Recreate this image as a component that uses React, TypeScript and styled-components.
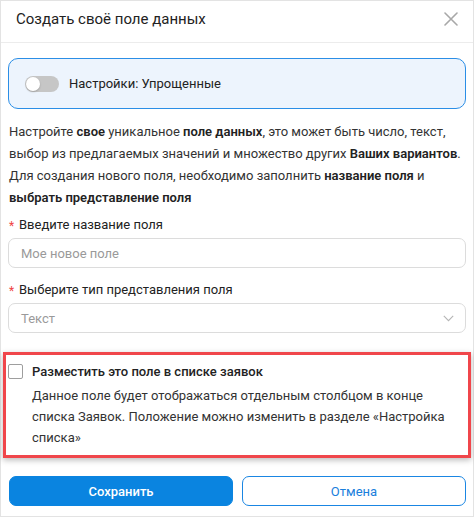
import React, { useState } from 'react';
import styled, { createGlobalStyle } from 'styled-components';

const GlobalStyle = createGlobalStyle`
  html, body {
    margin: 0;
    padding: 0;
    background: #ffffff;
  }
  * {
    box-sizing: border-box;
  }
`;

const Modal = styled.div`
  width: 474px;
  height: 517px;
  border: 1px solid #e3e3e3;
  background: #fff;
  font-family: Roboto, 'Liberation Sans', sans-serif;
  color: #2b2b2b;
  display: flex;
  flex-direction: column;
`;

const Header = styled.div`
  height: 42px;
  flex-shrink: 0;
  display: flex;
  align-items: center;
  justify-content: space-between;
  padding: 0 14px 5px 15px;
  border-bottom: 1px solid #ececec;
`;

const Title = styled.div`
  font-size: 15px;
  color: #222;
`;

const CloseButton = styled.button`
  border: none;
  background: none;
  padding: 0;
  width: 16px;
  height: 16px;
  display: flex;
  align-items: center;
  justify-content: center;
  cursor: pointer;
`;

const Body = styled.div`
  padding: 15px 7px 0 7px;
  display: flex;
  flex-direction: column;
`;

const SettingsBox = styled.div`
  height: 51px;
  border: 1px solid #2b8ee6;
  border-radius: 10px;
  background: #edf4fd;
  display: flex;
  align-items: center;
  gap: 10px;
  padding-left: 16px;
  font-size: 13px;
  color: #222;
`;

const Toggle = styled.button<{ $on: boolean }>`
  position: relative;
  width: 34px;
  height: 16px;
  border-radius: 8px;
  border: none;
  padding: 0;
  background: ${({ $on }) => ($on ? '#1e88e5' : '#c6c6c6')};
  cursor: pointer;

  &::after {
    content: '';
    position: absolute;
    top: 1px;
    left: ${({ $on }) => ($on ? '19px' : '1px')};
    width: 14px;
    height: 14px;
    border-radius: 50%;
    background: #fff;
    box-shadow: 0 1px 2px rgba(0, 0, 0, 0.2);
  }
`;

const Description = styled.p`
  margin: 12px 0 0 1px;
  font-size: 13px;
  line-height: 22px;
  color: #333;

  b {
    font-weight: 600;
    color: #222;
  }
`;

const Label = styled.div`
  margin-top: 3px;
  font-size: 13px;
  line-height: 22px;
  color: #222;
  display: flex;
  align-items: center;
  gap: 4px;
`;

const Asterisk = styled.span`
  color: #ef4444;
  font-size: 12px;
  width: 7px;
  padding-top: 3px;
  text-align: center;
`;

const Input = styled.input`
  margin-top: 1px;
  width: 100%;
  height: 30px;
  border: 1px solid #dcdcdc;
  border-radius: 7px;
  padding: 0 12px;
  font-family: inherit;
  font-size: 13px;
  color: #222;
  outline: none;

  &::placeholder {
    color: #9a9a9a;
  }
`;

const Select = styled.div`
  margin-top: 1px;
  height: 30px;
  border: 1px solid #dcdcdc;
  border-radius: 7px;
  padding: 0 11px 0 12px;
  display: flex;
  align-items: center;
  justify-content: space-between;
  font-size: 13px;
  color: #9a9a9a;
`;

const FieldGroup = styled.div<{ $gap?: number }>`
  margin-top: ${({ $gap }) => $gap ?? 0}px;
`;

const Highlight = styled.section`
  margin: 19px -5px 0 -5px;
  border: 3px solid #f0464b;
  box-shadow: 0 2px 6px rgba(0, 0, 0, 0.28);
  padding: 9px 10px 7px 2px;
`;

const CheckRow = styled.label`
  display: flex;
  align-items: center;
  gap: 9px;
  font-size: 13px;
  font-weight: 500;
  color: #222;
  cursor: pointer;
`;

const Checkbox = styled.span`
  width: 15px;
  height: 15px;
  border: 1px solid #9e9e9e;
  border-radius: 2px;
  background: #fff;
`;

const CheckText = styled.p`
  margin: 6px 0 0 24px;
  font-size: 13px;
  line-height: 21px;
  color: #333;
`;

const Actions = styled.div`
  margin-top: 18px;
  display: grid;
  grid-template-columns: 1fr 1fr;
  gap: 9px;
  padding: 0 0 0 1px;
`;

const Button = styled.button<{ $primary?: boolean }>`
  height: 30px;
  border-radius: 7px;
  font-family: inherit;
  font-size: 13px;
  cursor: pointer;
  border: 1px solid ${({ $primary }) => ($primary ? '#0a84e0' : '#1a86e3')};
  background: ${({ $primary }) => ($primary ? '#0a84e0' : '#fff')};
  color: ${({ $primary }) => ($primary ? '#fff' : '#1a80dc')};
  font-weight: ${({ $primary }) => ($primary ? 500 : 400)};
`;

const App: React.FC = () => {
  const [advanced, setAdvanced] = useState(false);

  return (
    <>
      <GlobalStyle />
      <Modal>
        <Header>
          <Title>Создать своё поле данных</Title>
          <CloseButton aria-label="close">
            <svg width="14" height="14" viewBox="0 0 14 14">
              <path d="M1 1 L13 13 M13 1 L1 13" stroke="#a8a8a8" strokeWidth="1.6" strokeLinecap="round" />
            </svg>
          </CloseButton>
        </Header>
        <Body>
          <SettingsBox>
            <Toggle $on={advanced} onClick={() => setAdvanced(!advanced)} />
            <span>Настройки: Упрощенные</span>
          </SettingsBox>

          <Description>
            Настройте <b>свое</b> уникальное <b>поле данных</b>, это может быть число, текст,
            выбор из предлагаемых значений и множество других <b>Ваших вариантов</b>.
            Для создания нового поля, необходимо заполнить <b>название поля</b> и{' '}
            <b>выбрать представление поля</b>
          </Description>

          <FieldGroup>
            <Label>
              <Asterisk>*</Asterisk>Введите название поля
            </Label>
            <Input placeholder="Мое новое поле" />
          </FieldGroup>

          <FieldGroup $gap={6}>
            <Label>
              <Asterisk>*</Asterisk>Выберите тип представления поля
            </Label>
            <Select>
              <span>Текст</span>
              <svg width="11" height="7" viewBox="0 0 11 7">
                <path d="M0.8 0.8 L5.5 5.6 L10.2 0.8" fill="none" stroke="#b5b5b5" strokeWidth="1.1" />
              </svg>
            </Select>
          </FieldGroup>

          <Highlight>
            <CheckRow>
              <Checkbox />
              Разместить это поле в списке заявок
            </CheckRow>
            <CheckText>
              Данное поле будет отображаться отдельным столбцом в конце списка Заявок.
              Положение можно изменить в разделе «Настройка списка»
            </CheckText>
          </Highlight>

          <Actions>
            <Button $primary>Сохранить</Button>
            <Button>Отмена</Button>
          </Actions>
        </Body>
      </Modal>
    </>
  );
};

export default App;
